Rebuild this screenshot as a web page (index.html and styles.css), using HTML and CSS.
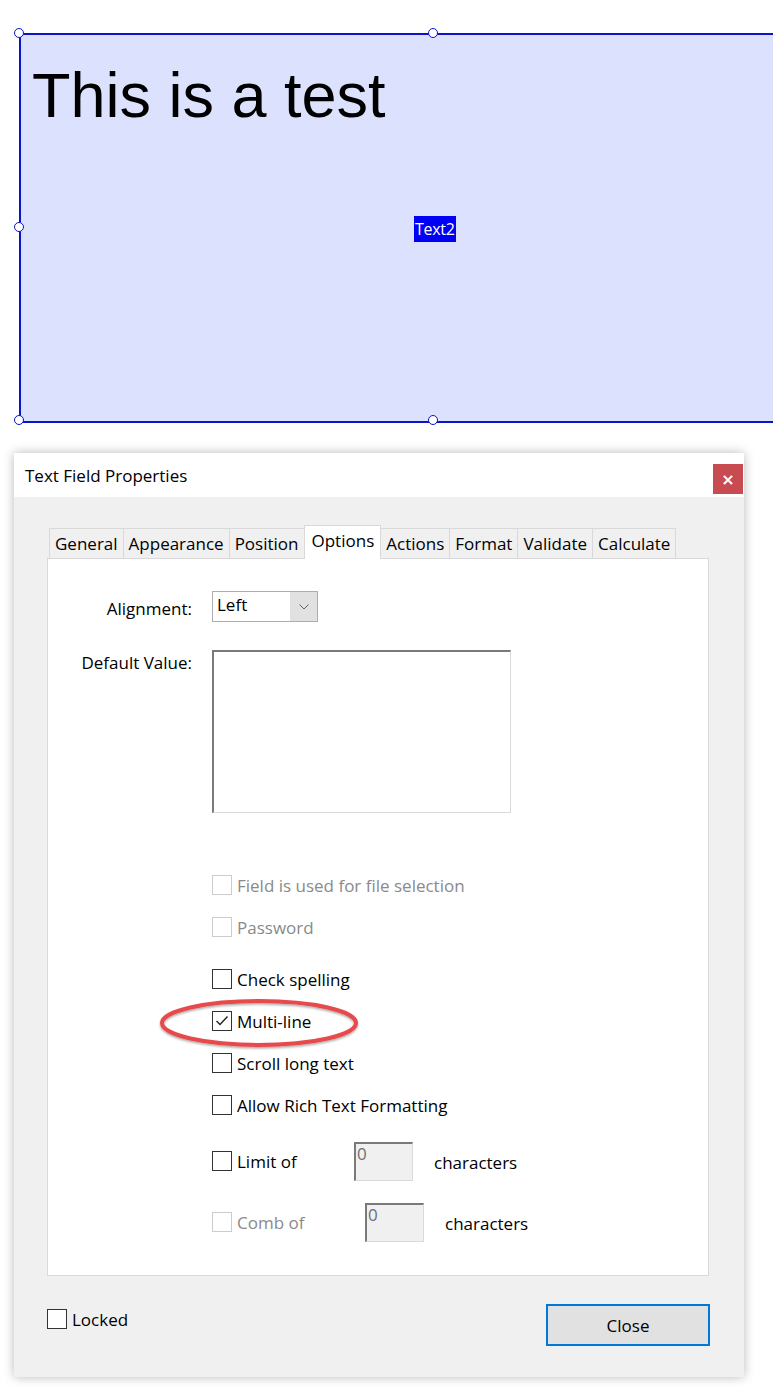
FILE: index.html
```html
<!DOCTYPE html>
<html>
<head>
<meta charset="utf-8">
<link rel="stylesheet" href="styles.css">
</head>
<body>
<div class="field">
  <div class="field-text">This is a test</div>
  <span class="field-name">Text2</span>
  <span class="handle h-tl"></span>
  <span class="handle h-tm"></span>
  <span class="handle h-ml"></span>
  <span class="handle h-bl"></span>
  <span class="handle h-bm"></span>
</div>

<div class="dialog">
  <div class="titlebar">
    <span class="title">Text Field Properties</span>
    <span class="xbtn">&#215;</span>
  </div>
  <div class="dialog-body">
    <div class="tabs">
      <span class="tab">General</span>
      <span class="tab">Appearance</span>
      <span class="tab">Position</span>
      <span class="tab active">Options</span>
      <span class="tab">Actions</span>
      <span class="tab">Format</span>
      <span class="tab">Validate</span>
      <span class="tab">Calculate</span>
    </div>
    <div class="panel">
      <div class="form-grid">
        <span class="lbl lbl-align">Alignment:</span>
        <div class="select"><span class="select-val">Left</span><span class="select-arrow"><svg width="10" height="6" viewBox="0 0 10 6"><polyline points="0.5,0.5 5,5 9.5,0.5" fill="none" stroke="#606060" stroke-width="1"/></svg></span></div>
        <span class="lbl lbl-def">Default Value:</span>
        <div class="textarea"></div>
      </div>

      <div class="checks">
        <div class="chk disabled r1"><span class="box"></span><span>Field is used for file selection</span></div>
        <div class="chk disabled r2"><span class="box"></span><span>Password</span></div>
        <div class="chk r3"><span class="box"></span><span>Check spelling</span></div>
        <div class="chk r2"><span class="box"><svg width="18" height="18" viewBox="0 0 18 18"><polyline points="3.5,9 7,12.5 14.5,4.5" fill="none" stroke="#222" stroke-width="1.4"/></svg></span><span>Multi-line</span></div>
        <div class="chk r2"><span class="box"></span><span>Scroll long text</span></div>
        <div class="chk r2"><span class="box"></span><span>Allow Rich Text Formatting</span></div>
        <div class="chk r4"><span class="box"></span><span class="chk-lbl lim">Limit of</span><span class="num">0</span><span class="chars">characters</span></div>
        <div class="chk disabled r5"><span class="box"></span><span class="chk-lbl comb">Comb of</span><span class="num">0</span><span class="chars">characters</span></div>
      </div>

      <svg class="oval" width="205" height="56" viewBox="0 0 205 56">
        <defs>
          <filter id="sh" x="-10%" y="-30%" width="120%" height="160%">
            <feDropShadow dx="0" dy="1.5" stdDeviation="1.2" flood-color="#000" flood-opacity="0.35"/>
          </filter>
        </defs>
        <ellipse cx="101" cy="26" rx="97" ry="22" fill="none" stroke="#e8484c" stroke-width="4" filter="url(#sh)"/>
      </svg>
    </div>
    <div class="footer">
      <div class="chk locked"><span class="box"></span><span>Locked</span></div>
      <span class="btn">Close</span>
    </div>
  </div>
</div>
</body>
</html>
```

FILE: styles.css
```css
html, body {
  margin: 0;
  padding: 0;
  background: #ffffff;
  overflow: hidden;
}
body {
  width: 773px;
  height: 1395px;
  font-family: "Open Sans", "Noto Sans", sans-serif;
  color: #000;
}

/* form field on page */
.field {
  position: relative;
  box-sizing: border-box;
  margin: 33px 0 0 19px;
  width: 830px;
  height: 390px;
  border: 2px solid #0a14c8;
  background: #dce2fe;
}
.field-text {
  font-family: "Liberation Sans", Arial, sans-serif;
  font-size: 63px;
  line-height: 1;
  padding: 29px 0 0 11px;
  color: #000;
}
.field-name {
  position: absolute;
  left: 393px;
  top: 181px;
  background: #0000f5;
  color: #fff;
  font-size: 16px;
  line-height: 26px;
  padding: 0 1px;
  letter-spacing: -0.3px;
}
.handle {
  position: absolute;
  width: 8px;
  height: 8px;
  border: 1.5px solid #0a14c8;
  border-radius: 50%;
  background: #fff;
}
.h-tl { left: -7px; top: -7px; }
.h-tm { left: 407px; top: -7px; }
.h-ml { left: -7px; top: 187px; }
.h-bl { left: -7px; top: 380px; }
.h-bm { left: 407px; top: 380px; }

/* dialog */
.dialog {
  margin: 30px 0 0 14px;
  width: 730px;
  height: 924px;
  background: #f0f0f0;
  box-shadow: 0 0 10px rgba(0, 0, 0, 0.28);
  display: flex;
  flex-direction: column;
}
.titlebar {
  height: 44px;
  background: #fff;
  display: flex;
  align-items: center;
  justify-content: space-between;
  padding-left: 11px;
  padding-right: 1px;
}
.title {
  font-size: 17px;
  margin-top: 1px;
}
.xbtn {
  width: 30px;
  height: 30px;
  background: #c74b50;
  color: #fff;
  font-family: "DejaVu Sans", sans-serif;
  font-weight: bold;
  font-size: 16px;
  display: flex;
  align-items: center;
  justify-content: center;
  margin-top: 8px;
}
.dialog-body {
  flex: 1;
  padding: 28px 0 0 33px;
  display: flex;
  flex-direction: column;
}

/* tabs */
.tabs {
  display: flex;
  align-items: flex-end;
  height: 34px;
  margin-left: 2px;
  margin-bottom: -1px;
  position: relative;
  z-index: 1;
}
.tab {
  box-sizing: border-box;
  height: 31px;
  border: 1px solid #d9d9d9;
  border-left: none;
  background: #f0f0f0;
  font-size: 17px;
  line-height: 29px;
  padding: 0 5px;
  color: #000;
}
.tab:first-child { border-left: 1px solid #d9d9d9; }
.tab.active {
  height: 34px;
  background: #fff;
  border-bottom: none;
  border-left: 1px solid #d9d9d9;
  margin-left: -1px;
  line-height: 30px;
  padding: 0 6px 0 7px;
}
.tab.active + .tab { border-left: none; }

.panel {
  position: relative;
  box-sizing: border-box;
  width: 662px;
  height: 718px;
  background: #fff;
  border: 1px solid #d9d9d9;
  padding-top: 32px;
}

.form-grid {
  display: grid;
  grid-template-columns: 144px 299px;
  column-gap: 20px;
  row-gap: 28px;
  align-items: start;
}
.lbl {
  font-size: 17px;
  text-align: right;
}
.lbl-align { line-height: 31px; padding-top: 2px; height: 31px; box-sizing: border-box; }
.lbl-def { line-height: 24px; margin-top: 1px; }

.select {
  box-sizing: border-box;
  width: 106px;
  height: 31px;
  border: 1px solid #adadad;
  background: #e1e1e1;
  display: flex;
}
.select-val {
  box-sizing: border-box;
  width: 77px;
  height: 29px;
  background: #fff;
  font-size: 17px;
  line-height: 26px;
  padding-left: 4px;
}
.select-arrow {
  flex: 1;
  display: flex;
  align-items: center;
  justify-content: center;
  padding-top: 1px;
}
.textarea {
  box-sizing: border-box;
  width: 299px;
  height: 163px;
  border: 1px solid;
  border-color: #7a7a7a #dadada #dadada #7a7a7a;
  border-width: 2px 1px 1px 2px;
  background: #fff;
}

/* checkboxes */
.checks {
  padding-left: 164px;
  display: flex;
  flex-direction: column;
}
.chk {
  display: flex;
  align-items: center;
  font-size: 17px;
  height: 20px;
}
.box {
  box-sizing: border-box;
  width: 20px;
  height: 20px;
  border: 1px solid #333;
  background: #fff;
  margin-right: 5px;
  display: flex;
  align-items: center;
  justify-content: center;
  flex: none;
}
.chk.disabled { color: #8a8a8a; }
.chk.disabled .box { border-color: #cccccc; }
.r1 { margin-top: 62px; }
.r2 { margin-top: 22px; }
.r3 { margin-top: 32px; }
.r4 { margin-top: 36px; }
.r5 { margin-top: 41px; }
.chk-lbl.lim { width: 117px; }
.chk-lbl.comb { width: 128px; }
.num {
  box-sizing: border-box;
  width: 59px;
  height: 39px;
  flex: none;
  border-style: solid;
  border-width: 2px 1px 1px 2px;
  border-color: #7a7a7a #dadada #dadada #7a7a7a;
  background: #f0f0f0;
  color: #6f6f6f;
  font-size: 17px;
  line-height: 20px;
  padding-left: 1px;
  align-self: center;
}
.chars {
  margin-left: 21px;
  color: #000;
  padding-top: 2px;
}

.oval {
  position: absolute;
  left: 110px;
  top: 438px;
}

/* footer */
.footer {
  display: flex;
  justify-content: space-between;
  align-items: flex-start;
  width: 663px;
  padding-top: 28px;
}
.locked { margin-top: 5px; }
.locked .box { border-color: #333; }
.btn {
  box-sizing: border-box;
  width: 164px;
  height: 42px;
  border: 2px solid #0078d7;
  background: #e1e1e1;
  font-size: 17px;
  display: flex;
  align-items: center;
  justify-content: center;
}
```
